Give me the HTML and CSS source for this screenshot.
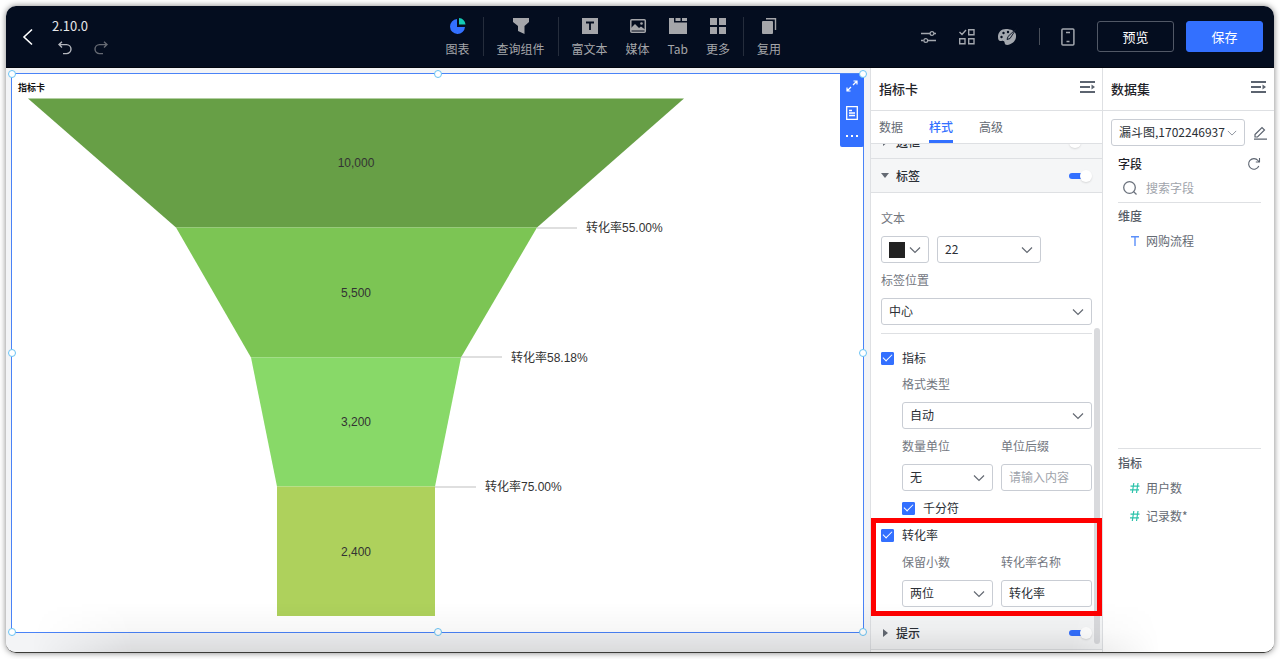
FILE: index.html
```html
<!DOCTYPE html>
<html lang="zh-CN">
<head>
<meta charset="utf-8">
<title>指标卡</title>
<link rel="stylesheet" href="styles.css">
</head>
<body>
<svg class="defs" aria-hidden="true">
  <symbol id="chevron" viewBox="0 0 12 8"><path d="M1 1.5 6 6.5 11 1.5" fill="none" stroke="currentColor" stroke-width="1.2"/></symbol>
  <symbol id="collapse" viewBox="0 0 16 14"><path d="M0 2h15M0 7h10M0 12h15" fill="none" stroke="currentColor" stroke-width="1.8"/><path d="M11.5 4.500 15 7l-3.500 2.500z" fill="currentColor"/></symbol>
</svg>
<div class="window">
  <header class="topbar">
    <div class="brand">
      <button class="icon-btn back" aria-label="返回"><svg width="12" height="18" viewBox="0 0 12 18"><path d="M10 1.500 2 9l8 7.500" fill="none" stroke="#fff" stroke-width="1.600"/></svg></button>
      <div class="version-box">
        <span class="version">2.10.0</span>
        <div class="history">
          <button class="icon-btn" aria-label="撤销"><svg width="14" height="14" viewBox="0 0 14 14"><path d="M4 .8 1 3.600l3 2.800M1 3.600h7.500a4.500 4.500 0 0 1 0 9H5" fill="none" stroke="#b4b7be" stroke-width="1.400"/></svg></button>
          <button class="icon-btn" aria-label="重做"><svg width="14" height="14" viewBox="0 0 14 14"><path d="m10 .8 3 2.800-3 2.800M13 3.600H5.500a4.500 4.500 0 0 0 0 9H9" fill="none" stroke="#666a73" stroke-width="1.400"/></svg></button>
        </div>
      </div>
    </div>
    <nav class="tools">
      <button class="tool"><svg width="20" height="18" viewBox="0 0 20 18"><path d="M9 2a7.500 7.500 0 1 0 8 8H9z" fill="#3370ff"/><path d="M11 1a7 7 0 0 1 6.500 6.500H11z" fill="#14c9b4"/></svg>图表</button>
      <span class="sep"></span>
      <button class="tool"><svg width="20" height="18" viewBox="0 0 20 18"><path d="M2 1h16v4l-4.500 4v8L7 14V9L2 5z" fill="#a5a6aa"/></svg>查询组件</button>
      <span class="sep"></span>
      <button class="tool"><svg width="20" height="18" viewBox="0 0 20 18"><path d="M2 1h16v16H2z" fill="#a5a6aa"/><path d="M6 5.500h8M10 5.500V13" stroke="#040d1f" stroke-width="1.800"/></svg>富文本</button>
      <button class="tool"><svg width="20" height="18" viewBox="0 0 20 18"><rect x="2.800" y="2.800" width="14.500" height="12.500" rx="1" fill="none" stroke="#a5a6aa" stroke-width="1.500"/><path d="M3 13.500V11l4-4 4 4 2-1.500 4 3v1z" fill="#a5a6aa"/><circle cx="13.500" cy="6.500" r="1.300" fill="#a5a6aa"/></svg>媒体</button>
      <button class="tool"><svg width="20" height="18" viewBox="0 0 20 18"><path d="M1 1h5v4.500h13V17H1zM7.500 1h5v3h-5zM14 1h5v3h-5z" fill="#a5a6aa"/></svg>Tab</button>
      <button class="tool"><svg width="20" height="18" viewBox="0 0 20 18"><path d="M2 1h7v7H2zM11 1h7v7h-7zM2 10h7v7H2zM11 10h7v7h-7z" fill="#a5a6aa"/></svg>更多</button>
      <span class="sep"></span>
      <button class="tool"><svg width="20" height="18" viewBox="0 0 20 18"><rect x="3" y="4" width="11" height="13" rx="1" fill="#a5a6aa"/><path d="M7 1.700h9.500V13" fill="none" stroke="#a5a6aa" stroke-width="1.400"/></svg>复用</button>
    </nav>
    <div class="actions">
      <button class="icon-btn" aria-label="设置"><svg width="16" height="18" viewBox="0 0 16 18"><path d="M0 5.500h9M13 5.500h2M0 12.500h2.500M7 12.500h8" stroke="#a3a7ae" stroke-width="1.300"/><circle cx="11" cy="5.500" r="1.900" fill="none" stroke="#a3a7ae" stroke-width="1.200"/><circle cx="4.800" cy="12.500" r="1.900" fill="none" stroke="#a3a7ae" stroke-width="1.200"/></svg></button>
      <button class="icon-btn" aria-label="批量"><svg width="16" height="18" viewBox="0 0 16 18"><path d="m.5 4 2.500 2.500L7 2M9.700 1.700H15v5H9.700zM.7 10.700H6v5H.7zM9.700 10.700H15v5H9.700z" fill="none" stroke="#a3a7ae" stroke-width="1.400"/></svg></button>
      <button class="icon-btn" aria-label="主题"><svg width="21" height="18" viewBox="0 0 21 18"><path d="M9 1C4 1 1 4.500 1 9c0 3 1 4.500 3.500 4 2-.5 3 .3 3.200 2 .3 2.500 3 2.300 5.800 1 4-1.800 6-5 5.500-9C18.400 3 14 1 9 1z" fill="#a3a7ae"/><g fill="#040d1f"><circle cx="4.500" cy="9" r="1.200"/><circle cx="6.500" cy="5" r="1.200"/><circle cx="11" cy="4" r="1.200"/></g><path d="M19.500.5 11 8.500l-1 3 3-1z" fill="#a3a7ae" stroke="#040d1f" stroke-width=".9"/></svg></button>
      <span class="mini-sep"></span>
      <button class="icon-btn" aria-label="移动端"><svg width="14" height="18" viewBox="0 0 14 18"><rect x=".9" y="1" width="12" height="16" rx="1" fill="none" stroke="#a3a7ae" stroke-width="1.500"/><path d="M5 4.500h4M5.500 13.500h3" stroke="#a3a7ae" stroke-width="1.400"/></svg></button>
      <button class="btn">预览</button>
      <button class="btn primary">保存</button>
    </div>
  </header>

  <main class="workspace">
    <section class="canvas">
      <article class="card">
        <h1 class="card-title">指标卡</h1>
        <svg class="funnel" viewBox="0 0 851 537" role="img" aria-label="漏斗图">
          <path d="M16 4H672L525 133H164z" fill="#679f46"/>
          <path d="M164 133H525L449 263H239z" fill="#7cc554"/>
          <path d="M239 263H449L423 392H265z" fill="#88d968"/>
          <path d="M265 392H423V521.500H265z" fill="#aed15c"/>
          <path d="M525 133.500H565M449 262.500H490M423 392.500H464" stroke="#bfbfbf"/>
          <g text-anchor="middle"><text x="344" y="72">10,000</text><text x="344" y="202">5,500</text><text x="344" y="331">3,200</text><text x="344" y="461">2,400</text></g>
          <text x="574" y="137">转化率55.00%</text><text x="499" y="267">转化率58.18%</text><text x="473" y="396">转化率75.00%</text>
        </svg>
        <div class="card-tools">
          <button class="icon-btn" aria-label="展开"><svg width="12" height="12" viewBox="0 0 12 12"><path d="M7 5l4-4M7.500 1H11v3.500M5 7l-4 4M1 7.500V11h3.500" fill="none" stroke="#fff" stroke-width="1.200"/></svg></button>
          <button class="icon-btn" aria-label="备注"><svg width="12" height="14" viewBox="0 0 12 14"><path d="M.7.7h10.600v12.600H.7zM3 4.500h3M3 7h6M3 9.500h6" fill="none" stroke="#fff" stroke-width="1.300"/></svg></button>
          <button class="icon-btn" aria-label="更多操作"><svg width="12" height="4" viewBox="0 0 12 4"><path d="M0 1h2v2H0zM5 1h2v2H5zM10 1h2v2h-2z" fill="#fff"/></svg></button>
        </div>
        <i class="handle nw"></i><i class="handle n"></i><i class="handle ne"></i><i class="handle w"></i><i class="handle e"></i><i class="handle sw"></i><i class="handle s"></i><i class="handle se"></i>
      </article>
    </section>

    <aside class="panel style-panel">
      <div class="panel-head"><h2>指标卡</h2><button class="icon-btn" aria-label="收起"><svg width="16" height="14"><use href="#collapse"/></svg></button></div>
      <div class="tabs"><button>数据</button><button class="active">样式</button><button>高级</button></div>
      <div class="scroll">
        <div class="clipped"><div class="fold"><span class="caret"></span><label for="t-border">边框</label><input id="t-border" class="toggle" type="checkbox"></div></div>
        <div class="fold"><span class="caret open"></span><label for="t-label">标签</label><input id="t-label" class="toggle" type="checkbox" checked></div>
        <div class="form">
          <div class="field"><label for="size">文本</label>
            <div class="text-row">
              <button class="color" aria-label="文本颜色"><span class="swatch"></span><svg width="12" height="8"><use href="#chevron"/></svg></button>
              <div class="select"><select id="size"><option>22</option></select><svg width="12" height="8"><use href="#chevron"/></svg></div>
            </div>
          </div>
          <div class="field"><label for="pos">标签位置</label><div class="select"><select id="pos"><option>中心</option></select><svg width="12" height="8"><use href="#chevron"/></svg></div></div>
          <hr>
          <label class="check"><input type="checkbox" checked>指标</label>
          <div class="nested">
            <div class="field"><label for="fmt">格式类型</label><div class="select"><select id="fmt"><option>自动</option></select><svg width="12" height="8"><use href="#chevron"/></svg></div></div>
            <div class="pair">
              <div class="field"><label for="unit">数量单位</label><div class="select"><select id="unit"><option>无</option></select><svg width="12" height="8"><use href="#chevron"/></svg></div></div>
              <div class="field"><label for="suffix">单位后缀</label><input id="suffix" class="text" type="text" placeholder="请输入内容"></div>
            </div>
            <label class="check"><input type="checkbox" checked>千分符</label>
          </div>
        </div>
        <div class="highlight">
          <label class="check"><input type="checkbox" checked>转化率</label>
          <div class="nested pair">
            <div class="field"><label for="dec">保留小数</label><div class="select"><select id="dec"><option>两位</option></select><svg width="12" height="8"><use href="#chevron"/></svg></div></div>
            <div class="field"><label for="rate">转化率名称</label><input id="rate" class="text" type="text" value="转化率"></div>
          </div>
        </div>
        <div class="fold"><span class="caret"></span><label for="t-tip">提示</label><input id="t-tip" class="toggle" type="checkbox" checked></div>
        <span class="thumb"></span>
      </div>
    </aside>

    <aside class="panel data-panel">
      <div class="panel-head"><h2>数据集</h2><button class="icon-btn" aria-label="收起"><svg width="16" height="14"><use href="#collapse"/></svg></button></div>
      <div class="data-body">
        <div class="dims">
          <div class="source">
            <div class="select"><select aria-label="数据集"><option>漏斗图,1702246937</option></select><svg width="12" height="8"><use href="#chevron"/></svg></div>
            <button class="icon-btn" aria-label="编辑"><svg width="14" height="14" viewBox="0 0 14 14"><path d="M2 8.500 9 1.500l2.500 2.500-7 7H2zM1 13.200h13" fill="none" stroke="#5c6470" stroke-width="1.200"/></svg></button>
          </div>
          <div class="fields-head"><h3>字段</h3><button class="icon-btn" aria-label="刷新"><svg width="14" height="14" viewBox="0 0 14 14"><path d="M11.800 9A5.300 5.300 0 1 1 11 3.500l1.200 1.300M12.500 1v4H8.800" fill="none" stroke="#5c6470" stroke-width="1.100"/></svg></button></div>
          <label class="search"><svg width="16" height="16" viewBox="0 0 16 16"><circle cx="7.500" cy="7.500" r="5.800" fill="none" stroke="#6b727d" stroke-width="1.300"/><path d="m11.500 11.500 3 3" stroke="#6b727d" stroke-width="1.300"/></svg><input type="search" placeholder="搜索字段" aria-label="搜索字段"></label>
          <h4>维度</h4>
          <ul><li><svg width="10" height="12" viewBox="0 0 10 12"><path d="M1 1.700h8M5 1.700V11" stroke="#5b8ff9" stroke-width="1.400"/></svg>网购流程</li></ul>
        </div>
        <div class="metrics">
          <h4>指标</h4>
          <ul>
            <li><svg width="10" height="12" viewBox="0 0 10 12"><path d="M3.800 1 2.300 11M8 1 6.500 11M.5 4.200h9M0 7.800h9" stroke="#2dc3ab" stroke-width="1.200"/></svg>用户数</li>
            <li><svg width="10" height="12" viewBox="0 0 10 12"><path d="M3.800 1 2.300 11M8 1 6.500 11M.5 4.200h9M0 7.800h9" stroke="#2dc3ab" stroke-width="1.200"/></svg>记录数*</li>
          </ul>
        </div>
      </div>
    </aside>
  </main>
  <div class="shade"></div>
</div>
</body>
</html>
```

FILE: styles.css
```css
* { box-sizing: border-box; }
body { margin: 0; padding: 6px; height: 100vh; background: #fff; color: #2b2f36; font: 12px/18px "Noto Sans CJK SC", sans-serif; overflow: hidden; }
button, input, select { font: inherit; color: inherit; margin: 0; }
button { background: none; border: 0; padding: 0; }
h1, h2, h3, h4, ul { margin: 0; padding: 0; font-weight: 500; font-size: 12px; }
svg { display: block; flex: none; }
.defs { display: none; }
.icon-btn { display: flex; align-items: center; justify-content: center; }

.window { position: relative; display: flex; flex-direction: column; height: calc(100vh - 12px); border-radius: 10px; overflow: hidden; background: #fff; border-bottom: 1px solid #3b3b38; }
body::before { content: ""; position: absolute; inset: 6px; border-radius: 10px; box-shadow: 0 0 6px rgba(0, 0, 0, .5); }

.topbar { display: flex; align-items: center; flex: none; height: 62px; padding: 0 11px 0 16px; background: #040d1f; border-bottom: 1px solid #02060f; }
.brand { display: flex; align-items: center; gap: 18px; flex: 1; }
.version-box { display: flex; flex-direction: column; gap: 6px; padding-bottom: 2px; }
.version { font-size: 13px; line-height: 18px; color: #e6e7e9; }
.history { display: flex; gap: 22px; padding-left: 6px; }
.tools { display: flex; align-items: center; gap: 18px; color: #a5a6aa; padding-right: 140px; }
.tool { display: flex; flex-direction: column; align-items: center; gap: 5px; padding-top: 2px; }
.sep { width: 1px; height: 39px; margin: 0 -5px; background: #252d3c; }
.tool:hover { color: #fff; }
.actions { display: flex; align-items: center; gap: 22px; }
.mini-sep { width: 1px; height: 17px; background: #484e59; margin: 0 -1px; }
.btn { width: 77px; height: 31px; border: 1px solid #515866; border-radius: 3px; color: #fff; font-size: 13px; }
.primary { background: #3370ff; border-color: #3370ff; margin-left: -10px; }

.workspace { display: flex; flex: 1; min-height: 0; }
.canvas { flex: 1; min-width: 0; display: flex; padding: 5px 6px 19px 5px; background: #f3f4f6; }
.card { position: relative; flex: 1; min-width: 0; display: flex; flex-direction: column; background: #fff; border: 1px solid #4a83f7; }
.card-title { font-size: 9px; line-height: 12px; font-weight: 700; color: #111; padding: 8px 6px 0; }
.funnel { flex: 1; min-height: 0; width: 100%; font-family: "Liberation Sans", "Noto Sans CJK SC", sans-serif; font-size: 12px; fill: #333; }
.card-tools { position: absolute; top: 0; right: -1px; display: flex; flex-direction: column; justify-content: space-between; align-items: center; width: 24px; height: 73px; padding: 6px 0 9px; background: #3370ff; border-radius: 0 0 2px 2px; }
.handle { position: absolute; width: 8px; height: 8px; margin: -4px; border: 1px solid #69c3f5; border-radius: 50%; background: #fff; }
.nw, .n, .ne { top: 0; } .sw, .s, .se { top: 100%; } .w, .e { top: 50%; }
.nw, .w, .sw { left: 0; } .n, .s { left: 50%; } .ne, .e, .se { left: 100%; }

.panel { display: flex; flex-direction: column; background: #fff; border-left: 1px solid #dee0e3; }
.style-panel { width: 232px; }
.data-panel { width: 172px; }
.panel-head { display: flex; align-items: center; justify-content: space-between; flex: none; height: 43px; padding: 0 7px 0 8px; border-bottom: 1px solid #dee0e3; color: #5c6470; }
.panel-head h2 { font-size: 13px; color: #1f2329; }
.panel-head .icon-btn { padding-bottom: 5px; }
.style-panel .panel-head { padding-right: 6px; }
.tabs { display: flex; gap: 26px; flex: none; height: 33px; padding: 0 8px; color: #646a73; border-bottom: 1px solid #dee0e3; }
.tabs button { border-bottom: 3px solid transparent; padding-top: 3px; }
.tabs .active { color: #3370ff; border-color: #3370ff; font-weight: 500; }

.scroll { position: relative; flex: 1; min-height: 0; overflow: hidden; background: #fff; }
.clipped { display: flex; align-items: flex-end; height: 15px; overflow: hidden; }
.clipped .fold { flex: 1; }
.fold { display: flex; align-items: center; height: 34px; padding: 0 10px; background: #f5f6f7; border-bottom: 1px solid #dee0e3; font-weight: 500; }
.fold label { flex: 1; }
.caret { width: 15px; }
.caret::before { content: ""; display: block; width: 0; margin-left: 2px; border: 4px solid transparent; border-left: 5px solid #646a73; border-right: 0; }
.caret.open::before { margin-left: 0; border: 4px solid transparent; border-top: 5px solid #646a73; border-bottom: 0; }
.toggle { appearance: none; display: flex; align-items: center; width: 23px; height: 6px; border-radius: 3px; background: #f5f6f7; }
.toggle::before { content: ""; width: 12px; height: 12px; border-radius: 50%; background: #fff; box-shadow: 0 1px 2px rgba(0, 0, 0, .12); }
.toggle:checked { background: linear-gradient(90deg, #3370ff 70%, transparent 70%); }
.toggle:checked::before { margin-left: auto; }

.form { display: flex; flex-direction: column; gap: 8px; padding: 16px 10px 1px; }
.nested { display: flex; flex-direction: column; gap: 8px; padding-left: 21px; }
.pair { display: grid; grid-template-columns: 1fr 1fr; gap: 8px; }
.field { display: flex; flex-direction: column; gap: 9px; min-width: 0; }
.field label { color: #73777f; }
.text-row { display: grid; grid-template-columns: 48px 104px; gap: 8px; }
.select { display: grid; align-items: center; min-width: 0; color: #646a73; }
.select > * { grid-area: 1 / 1; }
.select svg { justify-self: end; margin-right: 8px; pointer-events: none; }
.select select, .text, .color { appearance: none; width: 100%; min-width: 0; height: 27px; padding: 0 7px 2px; background: #fff; border: 1px solid #c9cdd4; border-radius: 3px; color: #2b2f36; }
.color { display: flex; align-items: center; justify-content: space-between; padding-bottom: 0; color: #646a73; }
.swatch { width: 16px; height: 16px; background: #222; }
::placeholder { color: #a0a4ab; opacity: 1; }
hr { width: 100%; margin: 0 0 7px; border: 0; border-top: 1px solid #dee0e3; }
.check { display: flex; align-items: center; gap: 8px; }
.check input { appearance: none; display: grid; place-items: center; width: 13px; height: 13px; border: 1px solid #c9cdd4; border-radius: 1px; }
.check input:checked { background: #3370ff; border-color: #3370ff; }
.check input:checked::before { content: ""; width: 8px; height: 4px; margin-bottom: 3px; border: solid #fff; border-width: 0 0 1px 1px; transform: rotate(-45deg); }
.highlight { position: relative; z-index: 2; display: flex; flex-direction: column; gap: 9px; padding: 3px 5px 4px; border: 5px solid #f00; }
.thumb { position: absolute; top: 184px; right: 2px; bottom: 8px; width: 6px; border-radius: 3px; background: #d9dadd; z-index: 1; }

.data-body { display: flex; flex-direction: column; flex: 1; min-height: 0; }
.dims { flex: 5 1 0; padding: 8px 7px 0 8px; }
.source { display: flex; align-items: center; justify-content: space-between; }
.source .select { width: 134px; }
.source .select svg { width: 10px; color: #9096a0; }
.fields-head { display: flex; align-items: center; justify-content: space-between; padding: 8px 6px 0 7px; }
.fields-head h3 { color: #1f2329; line-height: 20px; }
.search { display: flex; align-items: center; gap: 8px; height: 29px; margin: 0 6px 4px 7px; padding-left: 4px; border-bottom: 1px solid #dee0e3; }
.search input { width: 100%; min-width: 0; border: 0; padding: 0; outline: 0; appearance: none; background: none; }
h4 { color: #565c66; }
.dims h4 { padding-left: 7px; }
ul { list-style: none; font-weight: 400; color: #646a73; }
li { display: flex; align-items: center; gap: 6px; padding-left: 12px; height: 28px; }
.dims ul { padding: 2px 7px; }
.metrics { flex: 3 1 0; margin: 0 13px 0 15px; padding-top: 5px; border-top: 1px solid #dee0e3; }
.metrics ul { padding-top: 2px; }

.shade { position: absolute; inset: auto 0 0; height: 50px; pointer-events: none; z-index: 3; background: linear-gradient(transparent, rgba(0, 0, 0, .03) 55%, rgba(0, 0, 0, .1)); mask-image: linear-gradient(90deg, transparent 2%, #000 10%, #000 84%, transparent 91%); }
```
